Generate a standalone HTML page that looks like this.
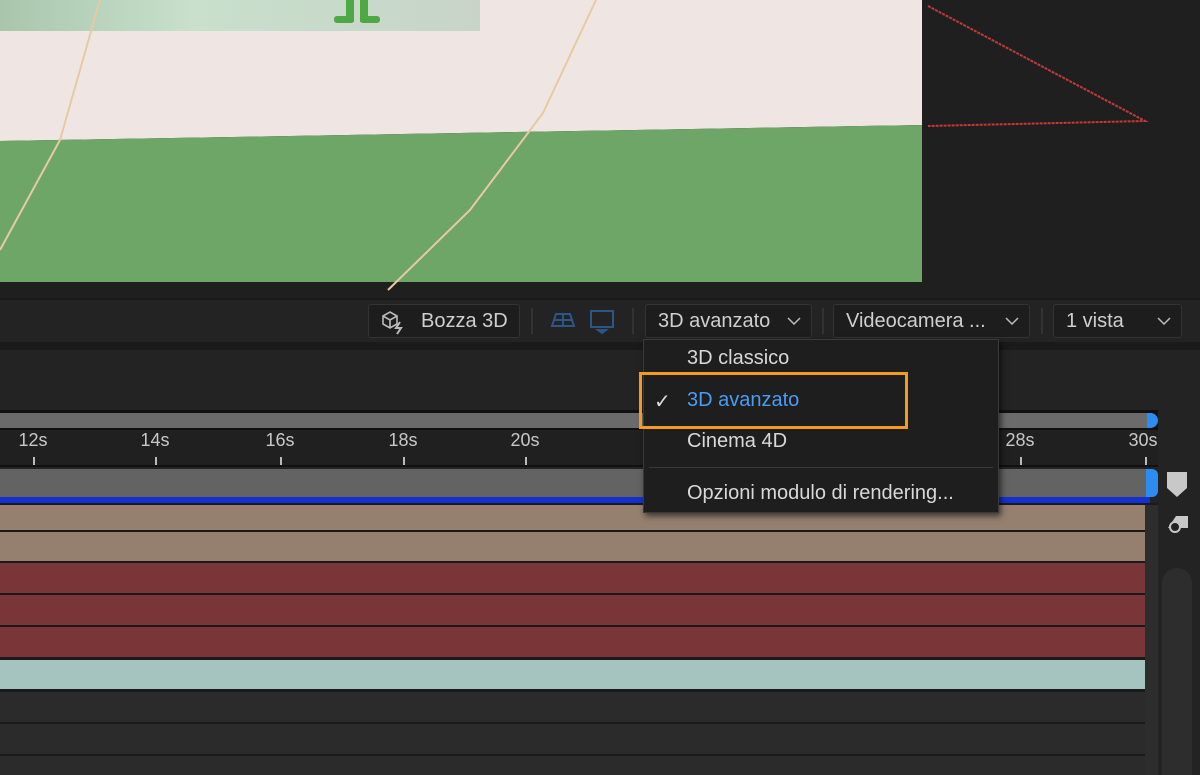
<!DOCTYPE html>
<html><head><meta charset="utf-8"><style>
*{margin:0;padding:0;box-sizing:border-box}
body{width:1200px;height:775px;overflow:hidden;background:#232323;position:relative;font-family:"Liberation Sans Narrow","Liberation Sans",sans-serif;color:#d0d0d0}
.a{position:absolute}
.btn{position:absolute;top:304px;height:34px;border:1px solid #333;border-radius:3px;background:#1d1d1d;font-size:20px;line-height:32px;color:#cfcfcf;padding-left:12px}
.chev{position:absolute;right:10px;top:12px;width:14px;height:8px}
.tick{position:absolute;top:430px;font-size:18px;color:#c8c8c8;transform:translateX(-50%)}
.tk{position:absolute;top:457px;width:2px;height:8px;background:#bbb}
.row{position:absolute;left:0;width:1145px}
.mi{position:absolute;left:43px;font-size:20px;color:#d8d8d8}
</style></head><body>
<div class="a" style="left:0;top:0;width:1200px;height:298px;background:#1f1f1f"></div>
<svg class="a" style="left:0;top:0" width="1200" height="298">
<polygon points="0,0 922,0 922,125 0,141" fill="#efe6e4"/>
<defs><linearGradient id="g" x1="0" x2="1"><stop offset="0" stop-color="#a9c6ac"/><stop offset="0.4" stop-color="#c8e0cc"/><stop offset="1" stop-color="#c8d4c8"/></linearGradient></defs>
<rect x="0" y="0" width="480" height="31" fill="url(#g)"/>
<rect x="346" y="0" width="8" height="22" fill="#4ea843"/><rect x="360" y="0" width="8" height="22" fill="#4ea843"/>
<rect x="334" y="16" width="20" height="7" fill="#4ea843" rx="3"/><rect x="360" y="16" width="20" height="7" fill="#4ea843" rx="3"/>
<polygon points="0,141 922,125 922,282 0,282" fill="#6da666"/>
<polyline points="100,0 60,140 0,250" fill="none" stroke="#e7c9a3" stroke-width="2"/>
<polyline points="596,0 543,113 470,210 388,290" fill="none" stroke="#e7c9a3" stroke-width="2"/>
<polyline points="928,6 1145,121 928,126" fill="none" stroke="#c03a3a" stroke-width="2" stroke-dasharray="3,1"/>
</svg>
<div class="a" style="left:0;top:298px;width:1200px;height:44px;background:#232323;border-top:2px solid #1a1a1a"></div>
<div class="a" style="left:0;top:342px;width:1200px;height:8px;background:#1a1a1a"></div>
<div class="btn" style="left:368px;width:152px;padding-left:52px">Bozza 3D</div>
<svg class="a" style="left:380px;top:309px" width="28" height="26" fill="none" stroke="#bbb" stroke-width="1.6"><path d="M3 7 L10 3 L17 7 L17 15 L10 19 L3 15 Z M3 7 L10 11 L17 7 M10 11 L10 19"/><path d="M20 13 L16 19 L21 19 L17 25" stroke-width="2"/></svg>
<div class="a" style="left:531px;top:308px;width:2px;height:26px;background:#333"></div>
<svg class="a" style="left:548px;top:308px" width="70" height="26" fill="none" stroke="#2c5588" stroke-width="2"><path d="M4 18 L8 6 L22 6 L26 18 Z M6 12 L24 12 M15 6 L15 18"/><rect x="43" y="3" width="22" height="16"/><path d="M50 22 L54 25 L58 22Z" fill="#2c5588"/></svg>
<div class="a" style="left:632px;top:308px;width:2px;height:26px;background:#333"></div>
<div class="btn" style="left:645px;width:167px">3D avanzato<svg class="chev" viewBox="0 0 14 8"><path d="M1 1 L7 7 L13 1" fill="none" stroke="#bbb" stroke-width="1.5"/></svg></div>
<div class="a" style="left:822px;top:308px;width:2px;height:26px;background:#333"></div>
<div class="btn" style="left:833px;width:197px">Videocamera ...<svg class="chev" viewBox="0 0 14 8"><path d="M1 1 L7 7 L13 1" fill="none" stroke="#bbb" stroke-width="1.5"/></svg></div>
<div class="a" style="left:1041px;top:308px;width:2px;height:26px;background:#333"></div>
<div class="btn" style="left:1053px;width:129px">1 vista<svg class="chev" viewBox="0 0 14 8"><path d="M1 1 L7 7 L13 1" fill="none" stroke="#bbb" stroke-width="1.5"/></svg></div>
<div class="a" style="left:0;top:410px;width:1158px;height:20px;background:#111"></div>
<div class="a" style="left:0;top:413px;width:1152px;height:15px;background:#6b6b6b"></div>
<div class="a" style="left:1147px;top:413px;width:11px;height:15px;background:#2e8cf0;border-radius:0 8px 8px 0"></div>
<div class="a" style="left:0;top:430px;width:1158px;height:37px;background:#202020;border-bottom:2px solid #111"></div>
<div class="tick" style="left:33px">12s</div><div class="tk" style="left:33px"></div>
<div class="tick" style="left:155px">14s</div><div class="tk" style="left:155px"></div>
<div class="tick" style="left:280px">16s</div><div class="tk" style="left:280px"></div>
<div class="tick" style="left:403px">18s</div><div class="tk" style="left:403px"></div>
<div class="tick" style="left:525px">20s</div><div class="tk" style="left:525px"></div>
<div class="tick" style="left:1020px">28s</div><div class="tk" style="left:1020px"></div>
<div class="tick" style="left:1143px">30s</div><div class="tk" style="left:1145px"></div>
<div class="a" style="left:0;top:469px;width:1150px;height:28px;background:#636363"></div>
<div class="a" style="left:1146px;top:469px;width:12px;height:28px;background:#2e8cf0;border-radius:0 6px 6px 0"></div>
<div class="a" style="left:0;top:497px;width:1150px;height:6px;background:#1530d0"></div>
<div class="a" style="left:0;top:503px;width:1158px;height:272px;background:#1a1a1a"></div>
<div class="row" style="top:505px;height:25px;background:#958070"></div>
<div class="row" style="top:532px;height:29px;background:#958070"></div>
<div class="row" style="top:563px;height:30px;background:#7a3538"></div>
<div class="row" style="top:595px;height:30px;background:#7a3538"></div>
<div class="row" style="top:627px;height:30px;background:#7a3538"></div>
<div class="row" style="top:660px;height:29px;background:#a5c4c0"></div>
<div class="row" style="top:692px;height:30px;background:#2b2b2b"></div>
<div class="row" style="top:724px;height:30px;background:#2b2b2b"></div>
<div class="row" style="top:756px;height:19px;background:#2b2b2b"></div>
<div class="a" style="left:1145px;top:505px;width:13px;height:270px;background:#2d2d2d"></div>
<div class="a" style="left:1158px;top:350px;width:42px;height:425px;background:#232323"></div>
<svg class="a" style="left:1164px;top:470px" width="30" height="70"><path d="M3 2 L23 2 L23 18 L13 27 L3 18Z" fill="#c8c8c8"/><path d="M4 58 L12 46 L24 46 L24 58Z" fill="#c8c8c8"/><circle cx="11" cy="57" r="5" fill="#232323" stroke="#c8c8c8" stroke-width="2"/></svg>
<div class="a" style="left:1162px;top:568px;width:30px;height:207px;background:#2d2d2d;border-radius:15px 15px 0 0"></div>
<div class="a" style="left:643px;top:339px;width:356px;height:174px;background:#1e1e1e;border:1px solid #3a3a3a;box-shadow:2px 3px 6px rgba(0,0,0,.6)">
<div class="mi" style="top:7px">3D classico</div>
<div class="a" style="left:10px;top:49px;font-size:20px;color:#ddd">&#10003;</div>
<div class="mi" style="top:49px;color:#4a9cf5">3D avanzato</div>
<div class="mi" style="top:90px">Cinema 4D</div>
<div class="a" style="left:5px;top:127px;width:344px;height:1px;background:#3a3a3a"></div>
<div class="mi" style="top:142px">Opzioni modulo di rendering...</div>
</div>
<div class="a" style="left:639px;top:372px;width:269px;height:57px;border:3px solid #f39a21"></div>
</body></html>
